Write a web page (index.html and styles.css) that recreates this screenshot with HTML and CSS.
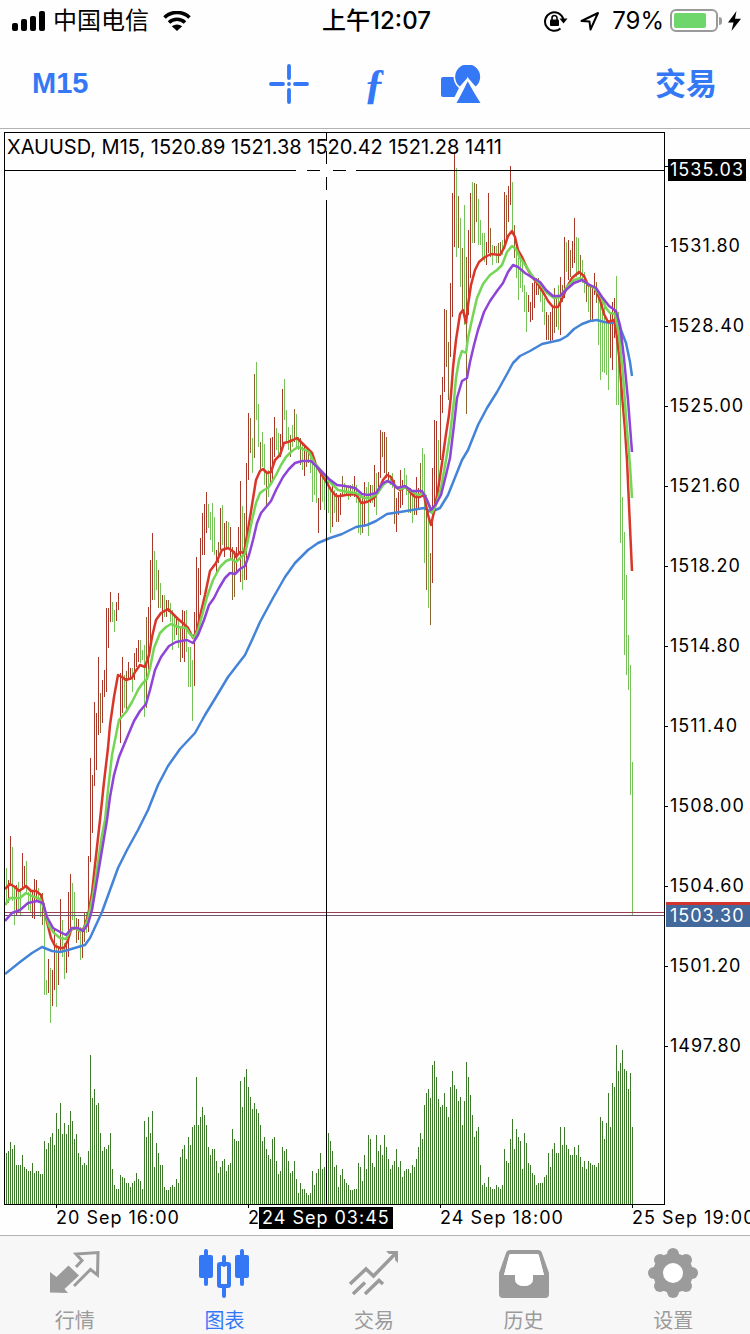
FILE: index.html
```
<!DOCTYPE html>
<html lang="zh-CN">

<head>
    <meta charset="UTF-8">
    <meta name="viewport" content="width=device-width, initial-scale=1.0">
    <title>XAUUSD, M15</title>

    <link rel="stylesheet" href="styles.css">
</head>

<body>

    <div class="status">
        <div class="status__left">
            <svg class="status__signal" width="34" height="20" viewBox="0 0 34 20">
                <rect x="0" y="12" width="6" height="8" rx="2" />
                <rect x="9" y="8" width="6" height="12" rx="2" />
                <rect x="18" y="5" width="6" height="15" rx="2" />
                <rect x="27" y="0" width="6" height="20" rx="2" />
            </svg>
            <span>中国电信</span>
            <svg class="status__wifi" width="28" height="20" viewBox="0 0 28 20">
                <path d="M1.5 6.5A18 18 0 0 1 26.500 6.500M6 11.500A11.500 11.500 0 0 1 22 11.500" fill="none" stroke="#000" stroke-width="3.600" />
                <path d="M14 20L8.800 15.300A8 8 0 0 1 19.200 15.300Z" />
            </svg>
        </div>
        <div class="status__time">上午12:07</div>
        <div class="status__right">
            <svg width="24" height="22" viewBox="0 0 24 22">
                <path d="M16.500 18.500A9.300 9.300 0 1 1 19.300 9" fill="none" stroke="#000" stroke-width="2" />
                <path d="M15.500 8.500H23.500L19.500 13.500Z" />
                <rect x="6" y="9.500" width="9" height="6.500" rx="1" />
                <path d="M8 10V8A2.500 2.500 0 0 1 13 8V10" fill="none" stroke="#000" stroke-width="1.600" />
            </svg>
            <svg width="20" height="20" viewBox="0 0 20 20">
                <path d="M1.500 10L18 2L10.500 18.500L9.500 10.500Z" fill="none" stroke="#000" stroke-width="2" stroke-linejoin="round" />
            </svg>
            <span class="status__percent">79%</span>
            <span class="status__battery"><span class="status__charge"></span></span>
            <svg class="status__bolt" width="13" height="20" viewBox="0 0 13 20">
                <path d="M8.500 0L0 11.500H5.500L3.500 20L13 7.800H7Z" />
            </svg>
        </div>
    </div>

    <header class="toolbar">
        <button class="toolbar__period">M15</button>
        <div class="toolbar__tools">
            <button class="toolbar__tool" aria-label="十字线">
                <svg width="40" height="40" viewBox="0 0 40 40">
                    <path d="M20 2V14M20 26V38M2 20H14M26 20H38M20 20H20.010" fill="none" stroke="currentColor" stroke-width="3.800" stroke-linecap="round" />
                </svg>
            </button>
            <button class="toolbar__tool toolbar__tool--function" aria-label="指标">ƒ</button>
            <button class="toolbar__tool" aria-label="对象">
                <svg width="40" height="38" viewBox="0 0 40 38">
                    <path d="M2 12H12.500A14.500 14.500 0 0 0 18 23L13.500 32H2A2 2 0 0 1 0 30V14A2 2 0 0 1 2 12Z" fill="currentColor" />
                    <path d="M18.800 21.500A12.500 12.500 0 1 1 34.500 21.500L28.500 14.500H25Z" fill="currentColor" />
                    <path d="M26.700 14L15 38H39.500Z" fill="currentColor" stroke="#fff" stroke-width="2" />
                    <path d="M27 18L15.500 38H39.500Z" fill="currentColor" />
                </svg>
            </button>
        </div>
        <button class="toolbar__trade">交易</button>
    </header>

    <main class="chart">
        <div class="chart__plot">
            <svg class="chart__canvas" viewBox="5 133 659 1071" preserveAspectRatio="none">
                <path class="volume" id="volume" />
                <path class="bar bar--up" id="bars-up" />
                <path class="bar bar--down" id="bars-down" />
                <path class="bar bar--mixed" id="bars-mixed" />
                <path class="price-line price-line--ask" d="M5 912H664V913H5Z" />
                <path class="price-line price-line--bid" d="M5 915H664V916H5Z" />
                <polyline class="ma ma--slow" id="ma-slow" />
                <polyline class="ma ma--fast" id="ma-fast" />
                <polyline class="ma ma--medium" id="ma-medium" />
                <polyline class="ma ma--long" id="ma-long" />
                <path class="crosshair" d="M5 170H296V171H5ZM307 170H320V171H307ZM333 170H346V171H333ZM356 170H664V171H356Z" />
                <path class="crosshair" d="M326 133H327V141H326ZM326 151H327V164H326ZM326 177H327V190H326ZM326 200H327V1204H326Z" />
            </svg>
            <div class="chart__title">XAUUSD, M15, 1520.89 1521.38 1520.42 1521.28 1411</div>
        </div>
        <div class="price-axis">
            <ul class="price-axis__list">
                <li class="price-axis__tick price-axis__tick--first"></li>
                <li class="price-axis__tick">1531.80</li>
                <li class="price-axis__tick">1528.40</li>
                <li class="price-axis__tick">1525.00</li>
                <li class="price-axis__tick">1521.60</li>
                <li class="price-axis__tick">1518.20</li>
                <li class="price-axis__tick">1514.80</li>
                <li class="price-axis__tick">1511.40</li>
                <li class="price-axis__tick">1508.00</li>
                <li class="price-axis__tick">1504.60</li>
                <li class="price-axis__tick">1501.20</li>
                <li class="price-axis__tick">1497.80</li>
            </ul>
            <div class="badge badge--cursor">1535.03</div>
            <div class="badge badge--bid">1503.30</div>
        </div>
        <div class="time-axis">
            <ul class="time-axis__list">
                <li class="time-axis__tick">20 Sep 16:00</li>
                <li class="time-axis__tick">23 Sep 17:00</li>
                <li class="time-axis__tick">24 Sep 18:00</li>
                <li class="time-axis__tick">25 Sep 19:00</li>
            </ul>
            <div class="badge badge--time">24 Sep 03:45</div>
        </div>
    </main>

    <nav class="tabs">
        <a class="tabs__item" href="#quotes">
            <svg width="52" height="52" viewBox="0 0 52 52">
                <path d="M1 24L7.500 29L19.500 17.500L30 27.500L15.500 41L19 45L1 44.500Z" fill="currentColor" />
                <path d="M27 19L33 12.500L27 6L49 4.500L48.500 27L41.500 21.500L25 38" fill="none" stroke="currentColor" stroke-width="3" />
            </svg>
            <span>行情</span>
        </a>
        <a class="tabs__item tabs__item--active" href="#chart">
            <svg width="52" height="52" viewBox="0 0 52 52">
                <path d="M8 3V36M26 9V17M26 40V48M44 3V36" fill="none" stroke="currentColor" stroke-width="4" stroke-linecap="round" />
                <rect x="1" y="7" width="14" height="23" rx="2" fill="currentColor" />
                <rect x="37" y="7" width="14" height="23" rx="2" fill="currentColor" />
                <rect x="21" y="16" width="10" height="22" rx="1" fill="none" stroke="currentColor" stroke-width="4" />
            </svg>
            <span>图表</span>
        </a>
        <a class="tabs__item" href="#trade">
            <svg width="52" height="52" viewBox="0 0 52 52">
                <path d="M2 36L18 21L25.500 28L48 5M5 46L17 34.500M17 46L31 32.500L35 36" fill="none" stroke="currentColor" stroke-width="3.500" />
                <path d="M38 3H50V15L47 12V6H41Z" fill="currentColor" />
            </svg>
            <span>交易</span>
        </a>
        <a class="tabs__item" href="#history">
            <svg width="52" height="52" viewBox="0 0 52 52">
                <path d="M12 2H40Q43 2 44 5L51 25V46Q51 50 47 50H5Q1 50 1 46V25L8 5Q9 2 12 2ZM13 6Q11 6 11 8L6 27H17V30Q17 38 26 38T35 30V27H46L41 8Q41 6 39 6Z" fill="currentColor" fill-rule="evenodd" />
                <path d="M13 6H39Q41 6 41 8L46 27H35V30Q35 38 26 38T17 30V27H6L11 8Q11 6 13 6Z" fill="#fff" />
            </svg>
            <span>历史</span>
        </a>
        <a class="tabs__item" href="#settings">
            <svg width="52" height="52" viewBox="0 0 52 52">
                <g fill="currentColor">
                    <circle cx="26" cy="25" r="20" />
                    <circle cx="26" cy="6" r="6" />
                    <circle cx="39" cy="12" r="6" />
                    <circle cx="45" cy="25" r="6" />
                    <circle cx="39" cy="38" r="6" />
                    <circle cx="26" cy="44" r="6" />
                    <circle cx="13" cy="38" r="6" />
                    <circle cx="7" cy="25" r="6" />
                    <circle cx="13" cy="12" r="6" />
                </g>
                <circle cx="26" cy="25" r="10" fill="#fff" />
            </svg>
            <span>设置</span>
        </a>
    </nav>

    <script src="chart.js"></script>

</body>

</html>
```

FILE: styles.css
```
* {
    box-sizing: border-box;
}

body {
    display: flex;
    flex-direction: column;
    min-height: 100vh;
    margin: 0;
    background-color: #fefefe;
    color: #000;
    font-family: Inter, "Noto Sans CJK SC", sans-serif;
    overflow-x: hidden;
}

button {
    padding: 0;
    border: 0;
    background: none;
    color: #3478f6;
    font-family: inherit;
    cursor: pointer;
}

ul {
    margin: 0;
    padding: 0;
    list-style: none;
}

svg {
    display: block;
}

/* status bar */

.status {
    display: grid;
    grid-template-columns: 1fr auto 1fr;
    align-items: center;
    height: 41px;
    padding: 0 9px 0 12px;
    font-size: 24px;
    line-height: 40px;
}

.status__left,
.status__right {
    display: flex;
    align-items: center;
}

.status__left {
    gap: 7px;
}

.status__wifi {
    margin-left: 7px;
}

.status__time {
    font-weight: 500;
}

.status__right {
    justify-content: flex-end;
    gap: 12px;
}

.status__battery {
    position: relative;
    width: 48px;
    height: 23px;
    margin-left: -6px;
    padding: 2px;
    border: 2px solid #9a9a9a;
    border-radius: 6px;
}

.status__battery::after {
    content: "";
    position: absolute;
    top: 6px;
    right: -6px;
    width: 3px;
    height: 8px;
    border-radius: 0 3px 3px 0;
    background-color: #9a9a9a;
}

.status__charge {
    display: block;
    width: 80%;
    height: 15px;
    border-radius: 2px;
    background-color: #6fd66b;
}

.status__bolt {
    margin-left: -2px;
}

/* toolbar */

.toolbar {
    display: grid;
    grid-template-columns: 1fr auto 1fr;
    align-items: center;
    height: 88px;
    padding: 0 33px 2px 32px;
    border-bottom: 1px solid #b2b2b2;
}

.toolbar__period {
    justify-self: start;
    font-family: "Liberation Sans Narrow", "Liberation Sans", sans-serif;
    font-size: 29px;
    font-weight: bold;
}

.toolbar__tools {
    display: flex;
    align-items: center;
    gap: 46px;
}

.toolbar__tool--function {
    width: 40px;
    font-family: "Liberation Serif", serif;
    font-size: 42px;
    font-style: italic;
    font-weight: bold;
    line-height: 40px;
}

.toolbar__trade {
    justify-self: end;
    font-size: 31px;
    font-weight: 700;
    line-height: 40px;
}

/* chart */

.chart {
    display: grid;
    flex: 1;
    grid-template-columns: 1fr 85px;
    grid-template-rows: 1fr 30px;
    padding: 3px 0 0 4px;
    overflow: hidden;
}

.chart__plot {
    position: relative;
    border: 1px solid #000;
}

.chart__canvas {
    position: absolute;
    width: 100%;
    height: 100%;
}

.chart__title {
    position: relative;
    padding: 2px;
    font-size: 20px;
    line-height: 25px;
    white-space: nowrap;
}

.volume {
    fill: #3d7a2c;
}

.bar--up {
    fill: #a8392a;
}

.bar--down {
    fill: #78c25c;
}

.bar--mixed {
    fill: #8c6632;
}

.price-line--ask {
    fill: #9c3d55;
}

.price-line--bid {
    fill: #6b5570;
}

.ma {
    fill: none;
    stroke-width: 2.5;
    stroke-linejoin: round;
}

.ma--fast {
    stroke: #d93629;
}

.ma--medium {
    stroke: #74d654;
}

.ma--long {
    stroke: #8e44d6;
}

.ma--slow {
    stroke: #4484d8;
}

.price-axis,
.time-axis {
    position: relative;
    font-size: 18px;
    letter-spacing: 1px;
    line-height: 26px;
    white-space: nowrap;
}

.price-axis__tick {
    display: flex;
    align-items: center;
    gap: 2px;
    height: 80px;
}

.price-axis__tick--first {
    height: 68px;
    margin-bottom: 6px;
}

.price-axis__tick::before {
    content: "";
    width: 3px;
    height: 1px;
    background-color: #000;
}

.time-axis {
    grid-column: 1 / -1;
}

.time-axis__list {
    display: flex;
    padding-left: 52px;
}

.time-axis__tick {
    flex: 0 0 192px;
}

.time-axis__tick::before {
    content: "";
    display: block;
    width: 1px;
    height: 3px;
    margin-bottom: -3px;
    background-color: #000;
}

.badge {
    position: absolute;
    padding: 0 3px;
    background-color: #000;
    color: #fff;
    line-height: 22px;
}

.badge--cursor {
    top: 27px;
    left: 3px;
    padding: 0 2px;
}

.badge--bid {
    top: 770px;
    right: 0;
    left: 1px;
    padding: 0 4px;
    border-top: 3px solid #d0342c;
    background-color: #42689c;
}

.badge--time {
    top: 2px;
    left: 255px;
}

/* tab bar */

.tabs {
    display: flex;
    height: 99px;
    padding-right: 2px;
    border-top: 1px solid #b2b2b2;
    background-color: #f7f7f7;
}

.tabs__item {
    display: flex;
    flex: 1;
    flex-direction: column;
    align-items: center;
    gap: 9px;
    padding-top: 12px;
    color: #9b9b9b;
    font-size: 20px;
    line-height: 24px;
    text-decoration: none;
}

.tabs__item--active {
    color: #3478f6;
}
```

FILE: chart.js
```
// one entry every 2px, starting at x = 6
const STEP = 2;
const LEFT = 6;
const BOTTOM = 1204;

const volumes = [
    51, 53, 62, 55, 59, 39, 39, 39, 49, 37, 35, 33, 33, 41, 31, 33, 33, 30, 30, 63,
    55, 61, 67, 71, 59, 91, 75, 101, 70, 81, 70, 79, 93, 83, 65, 70, 51, 47, 39, 41,
    39, 53, 149, 106, 115, 99, 101, 71, 53, 57, 55, 59, 71, 35, 19, 15, 15, 29, 27, 26,
    21, 21, 17, 21, 23, 31, 25, 23, 15, 83, 67, 87, 71, 93, 37, 61, 51, 39, 39, 17,
    14, 14, 17, 19, 17, 25, 21, 47, 55, 59, 45, 67, 59, 77, 79, 127, 79, 87, 97, 89,
    79, 57, 49, 55, 55, 43, 31, 37, 43, 45, 33, 39, 41, 75, 65, 63, 63, 123, 97, 127,
    135, 117, 107, 95, 101, 95, 91, 79, 63, 67, 55, 49, 45, 65, 67, 43, 30, 33, 57, 53,
    55, 43, 31, 33, 43, 25, 11, 21, 15, 15, 11, 9, 11, 33, 19, 31, 35, 51, 35, 37,
    40, 71, 63, 53, 37, 39, 17, 29, 35, 25, 21, 19, 14, 14, 15, 15, 41, 37, 23, 49,
    35, 69, 65, 41, 37, 69, 53, 59, 49, 69, 57, 45, 35, 39, 43, 55, 37, 43, 27, 33,
    35, 35, 31, 39, 37, 45, 57, 71, 65, 99, 111, 115, 106, 139, 143, 127, 105, 97, 99, 111,
    97, 87, 117, 133, 119, 115, 103, 107, 79, 103, 142, 127, 109, 89, 67, 73, 77, 39, 19, 21,
    17, 27, 17, 15, 15, 19, 17, 15, 19, 55, 43, 41, 65, 85, 55, 75, 67, 63, 35, 71,
    61, 41, 39, 31, 29, 19, 21, 21, 21, 27, 29, 51, 37, 55, 61, 51, 51, 77, 59, 77,
    59, 55, 49, 49, 57, 49, 59, 47, 37, 43, 35, 43, 41, 39, 39, 37, 41, 87, 83, 65,
    81, 111, 77, 121, 117, 159, 133, 141, 154, 135, 133, 115, 131, 77
];

// u = up, d = down, m = mixed, then high-low
const bars = `
    d868-905 u880-903 u836-883 d847-901 d887-925 u885-915 d882-912 d888-915 u853-890 u866-888
    d861-892 d892-910 d892-912 u890-918 u879-919 u880-900 d888-902 d893-917 m893-925 d903-995
    d980-995 u959-993 d968-1023 u970-1006 u930-990 d943-1007 u948-985 u899-953 d920-957 d943-979
    u943-973 u892-957 u874-930 d883-920 d892-930 m918-943 u919-940 d927-960 u930-958 m912-942
    d912-933 u856-932 u758-862 u775-833 u702-786 u713-770 u657-735 m693-733 u680-723 u670-697
    u608-692 u608-648 u592-622 d602-622 d610-632 u602-621 u593-610 u673-743 u657-713 d675-708
    m671-713 u662-680 u668-680 d668-692 u653-680 u648-667 u640-662 d640-663 d650-660 d645-717
    m617-708 u607-670 u560-650 u533-600 d551-600 d560-590 m570-608 d583-608 u595-622 d595-617
    u600-617 m600-612 d603-622 d610-650 d617-640 u618-635 d618-648 m627-662 u610-658 u611-662
    d610-652 d647-687 d647-687 d660-721 u612-686 u557-630 u568-620 u538-595 u513-555 u504-555
    u492-533 d504-528 d512-540 d503-552 d517-555 u550-575 m542-563 u508-550 d505-545 u523-557
    m521-548 d522-547 u527-558 m547-600 m553-597 u547-573 u527-553 u481-582 d506-590 m513-580
    u463-580 u413-480 m418-453 d438-473 m374-458 d362-420 d404-447 m442-470 d432-467 d444-485
    m472-505 d470-497 u438-483 u437-481 u417-457 d428-450 d433-457 u434-457 u389-448 d379-420
    d410-443 d427-450 m435-457 d425-447 m409-442 d414-447 d437-450 m438-465 d443-470 u447-476
    m450-467 m450-463 d452-473 d463-502 d463-495 d467-503 u498-533 u473-510 d473-502 d477-510
    d475-510 d480-513 d487-533 u485-527 d490-513 m493-522 u495-522 u493-515 m476-497 d483-495
    m485-495 d485-500 m485-497 d484-496 u476-497 d485-503 d493-533 d495-535 m497-533 u482-527
    d487-503 d482-536 u485-503 d485-503 u465-507 d473-515 u472-487 u430-478 m432-457 u432-473
    m437-478 u472-483 d475-485 d473-488 m480-524 u498-532 u492-515 u470-508 u480-505 d468-488
    d475-495 d487-513 m488-513 d492-523 m490-515 u477-515 u488-510 m463-495 d448-492 d454-563
    m495-590 d510-608 m553-625 u468-583 u420-508 u421-505 d440-487 u395-460 u377-413 u309-392
    m310-367 m342-400 u283-357 u193-317 u154-247 d168-257 m196-248 d218-287 m248-312 d205-325
    m257-414 u230-315 u193-278 d182-243 m183-243 m184-222 d199-245 d220-245 d233-258 d233-262
    u242-265 u193-253 m228-257 d245-265 u246-255 d246-263 m243-263 m242-255 d240-255 u192-245
    m195-238 u186-222 u166-205 d182-235 m225-258 d243-278 d258-300 d258-288 d257-292 d285-312
    d292-332 u295-312 u302-322 u283-320 u282-308 u278-295 m278-295 d282-302 d290-312 d298-325
    u312-340 m315-340 u312-342 u307-340 m288-333 m298-327 d285-330 u277-335 m285-302 u237-298
    d242-272 u240-280 m250-277 u241-268 u218-263 d237-277 d238-275 m255-278 d260-283 d272-293
    m282-302 d283-312 m287-322 u288-322 u273-295 m282-303 d292-345 d298-380 d302-372 d305-373
    d322-375 d322-390 u312-358 u302-370 u298-338 d276-405 d312-405 d325-543 d497-600 d532-655
    d575-675 d635-690 d665-795 d762-915
`.trim().split(/\s+/);

const averages = {
    "ma-fast": `5,889 10,884 15,887 19,891 22,889 26,886 31,891 36,891 41,895 44,907 47,922 51,938 55,946
        60,948 64,948 68,940 71,930 75,928 80,931 84,928 88,916 92,893 95,865 98,838 100,820 104,782
        108,748 110,725 114,697 118,675 122,677 126,680 132,678 135,672 140,665 145,667 149,655 152,637
        156,620 161,613 168,609 173,614 178,619 184,624 188,628 193,638 197,630 201,612 205,595 210,571
        216,563 222,550 228,548 234,552 236,557 240,552 244,553 248,530 252,505 256,480 260,471 263,469
        267,473 271,472 275,460 280,455 284,443 288,442 293,440 297,438 301,442 307,448 312,453 316,465
        322,475 327,483 331,490 336,496 340,496 346,495 355,494 358,497 361,503 367,502 374,498 379,490
        383,480 387,475 391,477 395,486 400,490 406,487 410,492 415,497 420,497 424,495 428,515 431,525
        434,512 438,490 442,463 446,434 449,415 451,395 453,368 456,340 460,314 463,310 466,323 468,305
        471,285 475,270 479,262 485,257 491,254 500,255 504,248 508,236 512,231 515,237 518,250 522,257
        527,268 532,277 538,284 543,292 548,301 553,307 558,307 562,299 567,287 572,278 579,272 584,276
        588,285 595,288 600,300 604,314 608,322 614,320 616,330 619,355 622,395 625,430 627,460 629,505
        632,571`,
    "ma-medium": `5,905 10,898 20,898 26,893 32,896 40,899 44,908 49,926 54,933 60,938 66,939 71,929 75,928
        80,931 84,929 88,919 93,895 98,862 102,835 105,820 108,790 112,755 116,735 119,720 126,712
        132,702 138,690 142,684 147,679 150,668 154,648 160,633 166,627 171,624 178,627 186,628 190,634
        194,638 198,630 203,612 207,597 213,580 220,567 226,561 231,559 236,562 240,558 245,554 248,540
        252,520 256,503 260,493 264,490 268,488 272,482 277,473 281,465 286,457 292,451 298,447 303,449
        309,452 314,462 322,472 330,482 338,490 348,492 356,493 364,498 370,498 377,494 383,485 388,481
        394,485 400,489 406,487 411,491 418,495 424,493 428,503 432,513 436,505 441,488 446,460 450,435
        454,400 456,378 459,360 462,351 466,353 468,338 473,315 477,298 483,284 490,275 497,270 502,265
        507,252 512,246 516,249 520,258 526,266 533,277 540,284 547,293 554,298 560,297 567,287 574,280
        580,278 586,283 594,288 600,295 606,308 610,313 615,314 619,335 623,375 627,430 630,465 632,498`,
    "ma-long": `5,921 12,913 20,910 28,903 37,901 43,903 47,917 53,928 60,932 66,935 72,928 78,928 83,931
        88,924 92,910 97,880 102,850 107,820 110,797 114,775 119,757 126,740 134,721 140,711 146,704
        150,690 155,670 161,657 169,646 176,642 187,640 193,643 198,635 204,620 209,605 214,598 219,588
        225,578 230,573 235,574 240,569 245,566 249,555 253,540 257,523 261,513 266,507 271,501 276,490
        283,477 289,469 295,463 302,461 311,461 320,470 329,479 337,485 345,486 355,488 362,494 368,495
        376,493 382,484 387,481 392,483 397,488 405,486 412,491 422,491 427,500 431,510 436,504 441,495
        446,475 450,458 454,425 457,398 462,381 467,378 470,362 474,345 478,330 484,312 490,301 497,291
        503,283 508,272 513,265 518,267 525,273 533,278 540,282 546,290 553,296 560,296 567,289 574,283
        582,280 588,284 596,288 602,297 609,306 616,311 620,325 624,358 628,400 632,452`,
    "ma-slow": `5,974 20,962 32,953 42,947 52,951 60,952 68,950 78,947 85,945 90,938 96,925 102,912 110,890
        118,868 127,850 138,830 148,810 158,785 168,766 180,749 195,733 205,715 216,697 228,677 245,655
        252,640 260,622 273,598 285,577 295,563 308,550 318,543 330,538 342,534 356,527 367,525 376,521
        387,514 400,512 412,510 424,508 431,512 440,508 448,495 456,475 462,460 468,450 478,425 487,408
        497,392 507,374 513,363 520,356 530,351 542,344 560,340 567,336 574,329 582,324 590,321 597,320
        604,322 612,323 617,320 621,330 626,343 630,362 632,376`
};

function column(index, top, bottom) {
    return `M${LEFT + index * STEP} ${top}h1V${bottom}h-1Z`;
}

const paths = { u: "", d: "", m: "" };
bars.forEach((bar, index) => {
    const [high, low] = bar.slice(1).split("-");
    paths[bar[0]] += column(index, high, low);
});

document.getElementById("bars-up").setAttribute("d", paths.u);
document.getElementById("bars-down").setAttribute("d", paths.d);
document.getElementById("bars-mixed").setAttribute("d", paths.m);
document.getElementById("volume").setAttribute("d",
    volumes.map((height, index) => column(index, BOTTOM - height, BOTTOM)).join(""));

Object.keys(averages).forEach((id) => {
    document.getElementById(id).setAttribute("points", averages[id]);
});
```
